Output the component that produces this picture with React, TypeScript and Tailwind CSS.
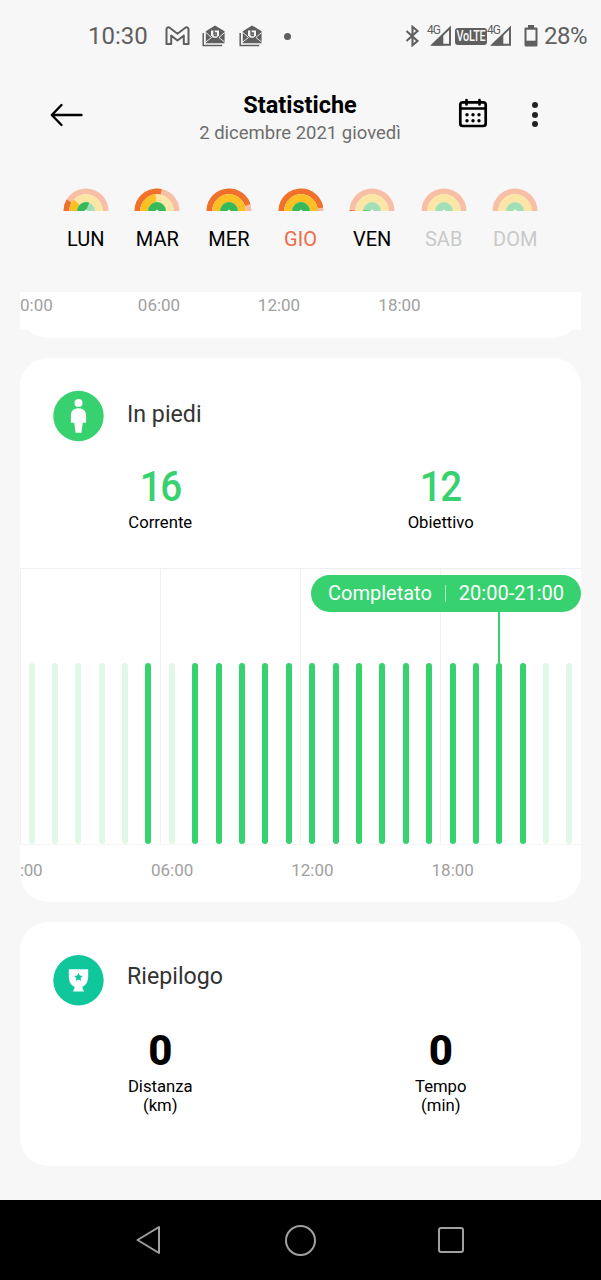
import React from 'react'

interface Day {
  label: string
  move: number
  exercise: number
  stand: number
  color: string
}

const days: Day[] = [
  { label: 'LUN', move: 17, exercise: 24, stand: 62, color: 'text-black' },
  { label: 'MAR', move: 57, exercise: 47, stand: 100, color: 'text-black' },
  { label: 'MER', move: 90, exercise: 100, stand: 100, color: 'text-black' },
  { label: 'GIO', move: 95, exercise: 100, stand: 100, color: 'text-[#ee6a48]' },
  { label: 'VEN', move: 1.5, exercise: 0, stand: 3, color: 'text-black' },
  { label: 'SAB', move: 0, exercise: 0, stand: 0, color: 'text-[#c9c9c9]' },
  { label: 'DOM', move: 0, exercise: 0, stand: 0, color: 'text-[#c9c9c9]' },
]

// hours of the day with at least one stand
const standHours = [5, 7, 8, 9, 10, 11, 12, 13, 14, 15, 16, 17, 18, 19, 20, 21]

function Arc({ r, width, track, fill, value }: { r: number; width: number; track: string; fill: string; value: number }) {
  const d = `M${23 - r} 23A${r} ${r} 0 0 1 ${23 + r} 23`
  return (
    <>
      <path d={d} fill="none" stroke={track} strokeWidth={width} />
      {value > 0 && (
        <path d={d} fill="none" stroke={fill} strokeWidth={width} pathLength={100} strokeDasharray={`${value} 200`} />
      )}
    </>
  )
}

function Rainbow({ day }: { day: Day }) {
  return (
    <svg width="46" height="23" viewBox="0 0 46 23">
      <Arc r={19.6} width={5.8} track="#f8bfa6" fill="#f1702c" value={day.move} />
      <Arc r={12.8} width={7.8} track="#fbe6a6" fill="#fcc024" value={day.exercise} />
      <Arc r={5.2} width={7.4} track="#a3dfb6" fill="#35b959" value={day.stand} />
    </svg>
  )
}

function MailIcon() {
  return (
    <svg width="24" height="22" viewBox="0 0 24 22" fill="none">
      <path d="M1.2 8v12.4h19" stroke="#5f5f5f" strokeWidth="1.5" />
      <path d="M3.8 6.2 13 .4l9.6 5.8v12H3.8z" fill="#5f5f5f" />
      <path d="M9 5.6h8v4.6l-2.2 2.6h-3.6L9 10.2z" fill="#f7f7f7" />
      <path d="m3.8 7.5 5.7 5-5.7 4.5M22.6 7.5l-5.7 5 5.7 4.5" stroke="#f7f7f7" strokeWidth=".9" />
      <path d="M12 5.2v5.3M12 8h2.2v2.5H12" stroke="#5f5f5f" strokeWidth="1.4" />
    </svg>
  )
}

function Signal() {
  return (
    <div className="relative h-[22px] w-6">
      <svg className="absolute top-0 left-0" width="24" height="22" viewBox="0 0 24 22">
        <path d="M4.5 19.7 22 2.8v16.9z" fill="none" stroke="#5f5f5f" strokeWidth="1.9" />
        <path d="M3.5 20.5 15.3 9v11.5z" fill="#5f5f5f" />
      </svg>
      <span className="absolute -top-px -left-px text-[12px] leading-[12px] tracking-[-1px]">4G</span>
    </div>
  )
}

function StatusBar() {
  return (
    <div className="flex h-[72px] items-center pl-[88px] text-[#5f5f5f]">
      <span className="w-[77px] text-[24px] leading-none">10:30</span>
      <svg width="25" height="20" viewBox="0 0 25 20" fill="none" stroke="#5f5f5f" strokeWidth="2" strokeLinejoin="round">
        <path d="M1.5 18V3.3C1.5 1.200 3.6.9 5 2l7.500 5.800L20 2c1.400-1.100 3.500-.8 3.500 1.300V18h-4.700V9.600l-6.300 4.900-6.300-4.900V18z" />
      </svg>
      <div className="ml-3 flex gap-[13px]">
        <MailIcon />
        <MailIcon />
      </div>
      <span className="ml-[21px] h-[7px] w-[7px] rounded-full bg-[#5f5f5f]" />
      <svg className="ml-[114px]" width="15" height="22" viewBox="0 0 15 22" fill="none" stroke="#5f5f5f" strokeWidth="2.1">
        <path d="m1.5 6 11 10-5 4.2V1.8l5 4.200-11 10" />
      </svg>
      <div className="ml-2">
        <Signal />
      </div>
      <span className="ml-[3px] flex h-[17px] w-8 items-center justify-center rounded-[3px] bg-[#5f5f5f]">
        <span className="scale-x-90 scale-y-115 text-[12px] leading-none font-medium tracking-[-0.3px] text-[#f7f7f7]">VoLTE</span>
      </span>
      <div className="ml-px">
        <Signal />
      </div>
      <svg className="ml-3" width="14" height="22" viewBox="0 0 14 22">
        <path d="M4 0h6v2.5h2.5q1 0 1 1V20q0 1.5-1.5 1.5H2Q.5 21.5.5 20V3.5q0-1 1-1H4z" fill="#5f5f5f" />
        <path d="M2.5 4.7h9v11h-9z" fill="#f7f7f7" />
      </svg>
      <span className="ml-1.5 text-[24px] leading-none tracking-[-0.5px]">28%</span>
    </div>
  )
}

function Header() {
  return (
    <div className="flex h-[84px] items-start pt-5 pl-[50px]">
      <svg className="mt-[11px]" width="33" height="24" viewBox="0 0 33 24" fill="none" stroke="#000" strokeWidth="2.4" strokeLinecap="round" strokeLinejoin="round">
        <path d="M31.5 12H2M11.5 2 1.8 12l9.7 10" />
      </svg>
      <div className="ml-[97px] w-60 text-center whitespace-nowrap">
        <h1 className="text-[23.5px] leading-[27px] font-bold text-black">Statistiche</h1>
        <p className="text-[18.5px] leading-7 text-[#6e6e6e]">2 dicembre 2021 giovedì</p>
      </div>
      <svg className="mt-1.5 ml-[38px]" width="30" height="31" viewBox="0 0 30 31" fill="none" stroke="#000" strokeWidth="2.7">
        <rect x="2.3" y="4.3" width="25.4" height="23.7" rx="2.5" />
        <path d="M2.3 10.5h25.4M8.5 2v4.5M21.5 2v4.5" strokeLinecap="round" />
        <g fill="#000" stroke="none">
          <circle cx="9" cy="16.8" r="1.7" />
          <circle cx="15" cy="16.8" r="1.7" />
          <circle cx="21" cy="16.8" r="1.7" />
          <circle cx="9" cy="22.8" r="1.7" />
          <circle cx="15" cy="22.8" r="1.7" />
          <circle cx="21" cy="22.8" r="1.7" />
        </g>
      </svg>
      <div className="mt-2.5 ml-[44px] flex flex-col gap-[3.5px]">
        <span className="h-1.5 w-1.5 rounded-full bg-[#222]" />
        <span className="h-1.5 w-1.5 rounded-full bg-[#222]" />
        <span className="h-1.5 w-1.5 rounded-full bg-[#222]" />
      </div>
    </div>
  )
}

function Stat({ value, label, valueClass }: { value: string; label: React.ReactNode; valueClass: string }) {
  return (
    <div className="flex flex-1 flex-col items-center text-center">
      <span className={`text-[42px] leading-[42px] ${valueClass}`}>{value}</span>
      <span className="mt-[5px] text-[16.7px] leading-[19px] text-black">{label}</span>
    </div>
  )
}

function StandChart() {
  return (
    <div className="border-t border-[#efefef]">
      <div className="relative h-[276px] border-b border-[#f5f5f5]">
        <div className="flex h-full">
          {[0, 1, 2, 3].map((i) => (
            <div key={i} className="w-[140px] border-l border-[#f0f0f0]" />
          ))}
        </div>
        {/* Hour bars */}
        <div className="absolute inset-x-0 bottom-0 flex h-[181px] justify-between pr-[8.5px] pl-[8.5px]">
          {[...Array(24)].map((_, h) => (
            <div
              key={h}
              className={`h-full w-1.5 rounded-full ${standHours.includes(h) ? 'bg-[#38d16f]' : 'bg-[#e1f7e8]'}`}
            />
          ))}
        </div>
        {/* Selected hour */}
        <div className="absolute top-[42px] left-[478px] h-[56px] w-0.5 bg-[#38d16f]" />
        <div className="absolute top-1.5 right-0 flex h-[37px] w-[270px] items-center justify-center rounded-full bg-[#38d16f] pb-px text-[20px] text-white">
          <span>Completato</span>
          <span className="mx-[13px] h-[17px] w-px bg-white/60" />
          <span>20:00-21:00</span>
        </div>
      </div>
      <div className="flex h-[51px] items-center text-[17px] text-[#a0a0a0]">
        <span className="w-[82px] tracking-[-0.3px]">:00</span>
        {['06:00', '12:00', '18:00'].map((t) => (
          <span key={t} className="w-[140.3px] text-center">{t}</span>
        ))}
      </div>
    </div>
  )
}

export default function App() {
  return (
    <div className="flex h-[1280px] w-[601px] flex-col overflow-hidden bg-[#f7f7f7] font-[Roboto,sans-serif]">
      <StatusBar />
      <Header />

      {/* Week */}
      <div className="flex h-[136px] px-[50px] pt-8">
        {days.map((day) => (
          <div key={day.label} className="flex flex-1 flex-col items-center">
            <Rainbow day={day} />
            <span className={`mt-[14px] text-[20px] leading-7 ${day.color}`}>{day.label}</span>
          </div>
        ))}
      </div>

      {/* Tail of the previous card */}
      <div className="mx-5 h-[46px] w-[561px] rounded-b-[28px] bg-white">
        <div className="flex h-[38px] bg-white pt-px text-[17px] leading-6 text-[#a0a0a0]">
          <span className="w-[79px]">0:00</span>
          <span className="w-[120px] text-center">06:00</span>
          <span className="w-[120px] text-center">12:00</span>
          <span className="w-[121px] text-center">18:00</span>
        </div>
      </div>

      {/* Stand */}
      <section className="mx-5 mt-5 h-[544px] w-[561px] overflow-hidden rounded-[28px] bg-white">
        <div className="flex h-[83px] items-start pt-8 pl-[33px]">
          <svg width="51" height="52" viewBox="0 0 51 52">
            <circle cx="25.5" cy="26" r="25.2" fill="#38d16f" />
            <circle cx="25.5" cy="13" r="4" fill="#fff" />
            <path d="M25.5 18.200c5 0 7.600 3 7.600 7v7.600h-3.400l-1.200 10h-6l-1.200-10h-3.400v-7.600c0-4 2.600-7 7.600-7z" fill="#fff" />
          </svg>
          <h2 className="mt-2.5 ml-[23px] text-[23.2px] leading-7 text-[#333]">In piedi</h2>
        </div>
        <div className="mt-[25px] flex h-[102px]">
          <Stat value="16" label="Corrente" valueClass="scale-x-92 font-medium tracking-[-1.5px] text-[#38d16f]" />
          <Stat value="12" label="Obiettivo" valueClass="scale-x-92 font-medium tracking-[-1.5px] text-[#38d16f]" />
        </div>
        <StandChart />
      </section>

      {/* Summary */}
      <section className="mx-5 mt-5 h-[244px] w-[561px] overflow-hidden rounded-[28px] bg-white">
        <div className="flex h-[83px] items-start pt-8 pl-[33px]">
          <svg width="51" height="52" viewBox="0 0 51 52">
            <circle cx="25.5" cy="26.3" r="25.2" fill="#10c79c" />
            <path d="M15.8 15.3h19.4v7c0 5-1.8 8.7-5.7 10.5v1.4l1.6 3.3H19.9l1.6-3.3v-1.4c-3.9-1.8-5.7-5.5-5.7-10.5z" fill="#fff" />
            <path d="m25.5 18.8 1.3 2.7 3 .4-2.2 2.1.5 3-2.6-1.4-2.6 1.4.5-3-2.2-2.1 3-.4z" fill="#10c79c" />
          </svg>
          <h2 className="mt-2 ml-[23px] text-[23.2px] leading-7 text-[#333]">Riepilogo</h2>
        </div>
        <div className="mt-[25px] flex">
          <Stat value="0" label={<>Distanza<br />(km)</>} valueClass="font-extrabold text-black" />
          <Stat value="0" label={<>Tempo<br />(min)</>} valueClass="font-extrabold text-black" />
        </div>
      </section>

      {/* Android navigation */}
      <nav className="mt-auto flex h-20 items-center bg-black pl-[136px]">
        <svg width="25" height="30" viewBox="0 0 25 30" fill="none" stroke="#a0a0a0" strokeWidth="2" strokeLinejoin="round">
          <path d="M1.5 15 23 2v26z" />
        </svg>
        <span className="ml-[124px] h-[31px] w-[31px] rounded-full border-2 border-[#a0a0a0]" />
        <span className="ml-[122px] h-[26px] w-[26px] rounded-[3px] border-2 border-[#a0a0a0]" />
      </nav>
    </div>
  )
}
